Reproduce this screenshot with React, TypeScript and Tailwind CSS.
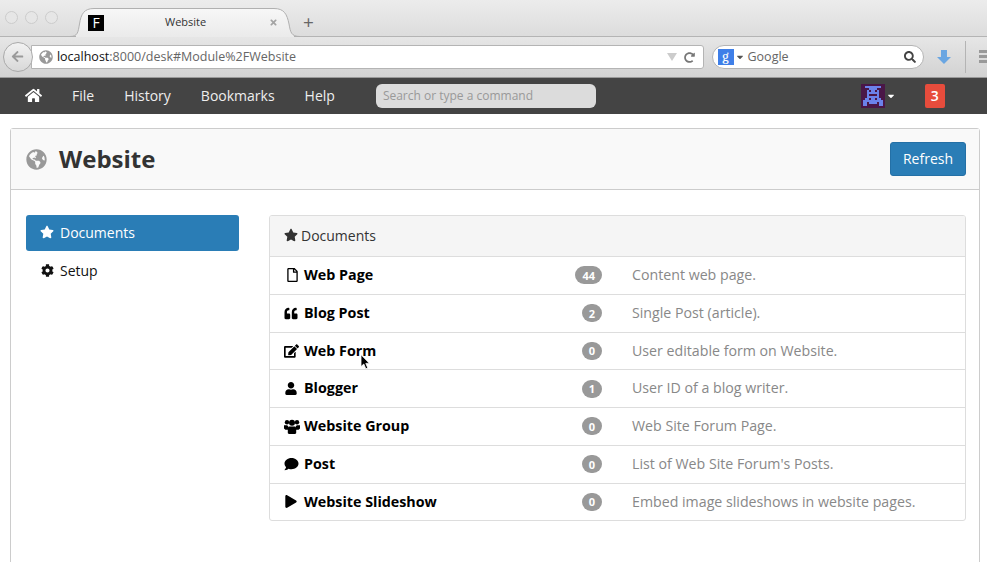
import type { IconType } from 'react-icons';
import {
  FaArrowLeft,
  FaCaretDown,
  FaCog,
  FaComment,
  FaEdit,
  FaGlobeAmericas,
  FaHome,
  FaPlay,
  FaQuoteLeft,
  FaRedoAlt,
  FaRegFile,
  FaSearch,
  FaStar,
  FaTimes,
  FaUser,
} from 'react-icons/fa';

interface DocRow {
  icon: IconType;
  name: string;
  count: number;
  description: string;
  iconClass: string;
}

// chunky three-person glyph, the package's version is too flat
function PeopleIcon({ className }: { className?: string }) {
  return (
    <svg viewBox="0 0 16 15" fill="currentColor" className={className}>
      <circle cx="3" cy="3.2" r="2.2" />
      <circle cx="13" cy="3.2" r="2.2" />
      <circle cx="8" cy="3.8" r="3" />
      <path d="M0 6.2h3.2l1 1.2v3.4H1.4L0 9.6zM16 6.2h-3.2l-1 1.2v3.4h2.8L16 9.6z" />
      <path d="M4.8 7.4h6.4l1 1.4v5c0 .7-.5 1.2-1.2 1.2H5c-.7 0-1.2-.5-1.2-1.2v-5z" />
    </svg>
  );
}

const ROWS: DocRow[] = [
  { icon: FaRegFile, name: 'Web Page', count: 44, description: 'Content web page.', iconClass: 'ml-[3px] h-[14px] w-[11px]' },
  { icon: FaQuoteLeft, name: 'Blog Post', count: 2, description: 'Single Post (article).', iconClass: 'h-[13px] w-[14px]' },
  { icon: FaEdit, name: 'Web Form', count: 0, description: 'User editable form on Website.', iconClass: 'h-[14px] w-[15px]' },
  { icon: FaUser, name: 'Blogger', count: 1, description: 'User ID of a blog writer.', iconClass: 'ml-px h-[13px] w-[12px]' },
  { icon: PeopleIcon, name: 'Website Group', count: 0, description: 'Web Site Forum Page.', iconClass: 'h-[15px] w-[16px]' },
  { icon: FaComment, name: 'Post', count: 0, description: "List of Web Site Forum's Posts.", iconClass: 'h-[14px] w-[15px]' },
  { icon: FaPlay, name: 'Website Slideshow', count: 0, description: 'Embed image slideshows in website pages.', iconClass: 'ml-px h-[13px] w-[12px]' },
];

const NAV_ITEMS = ['File', 'History', 'Bookmarks', 'Help'];

// pixel invader used as the avatar
const INVADER = [
  '............',
  '..XXXXXXXX..',
  '....XXXX....',
  '...X.XX.X...',
  '...XXXXXX...',
  '...X....X...',
  '...XXXXXX...',
  '..XX.XX.XX..',
  '.XXXXXXXXXX.',
  '.XX.XXXX.XX.',
  '.XX......XX.',
  '............',
];

function Invader() {
  return (
    <svg viewBox="0 0 12 12" className="h-6 w-6 bg-[#4a1747]" shapeRendering="crispEdges">
      {INVADER.flatMap((line, y) =>
        line.split('').map((cell, x) =>
          cell === 'X' ? <rect key={`${x}-${y}`} x={x} y={y} width={1} height={1} fill="#6b82ea" /> : null,
        ),
      )}
    </svg>
  );
}

function TabStrip() {
  return (
    <div className="relative flex h-[37px] items-start bg-gradient-to-b from-[#ececec] to-[#dcdcdc]">
      <div className="absolute bottom-0 left-0 right-0 h-px bg-[#b4b4b4]" />
      <div className="ml-[5px] mt-[11px] flex gap-[7px]">
        <span className="h-[13px] w-[13px] rounded-full border border-[#cccccc] bg-[#e6e6e6]" />
        <span className="h-[13px] w-[13px] rounded-full border border-[#cccccc] bg-[#e6e6e6]" />
        <span className="h-[13px] w-[13px] rounded-full border border-[#cccccc] bg-[#e6e6e6]" />
      </div>
      <div className="relative ml-[12px] mt-[8px] h-[29px] w-[230px]">
        <svg viewBox="0 0 230 29" className="absolute inset-0 h-full w-full">
          <defs>
            <linearGradient id="tabFill" x1="0" y1="0" x2="0" y2="1">
              <stop offset="0" stopColor="#f7f7f7" />
              <stop offset="1" stopColor="#ebebeb" />
            </linearGradient>
          </defs>
          <path
            d="M0 28.5 C8 28.5 8 24 9.5 16 C11 6 14 0.5 24 0.5 L204 0.5 C214 0.5 217 6 219 16 C220.5 24 221 28.5 230 28.5 Z"
            fill="url(#tabFill)"
            stroke="#b0b0b0"
          />
          <path d="M6 28.5 L224 28.5" stroke="#ebebeb" />
        </svg>
        <div className="relative flex h-full items-center">
          <span className="ml-[18px] grid h-4 w-4 place-items-center bg-black text-[14px] leading-none text-white">F</span>
          <span className="ml-[61px] text-[11px] text-[#333]">Website</span>
          <FaTimes className="ml-[63px] h-[9px] w-[9px] text-[#a4a4a4]" />
        </div>
      </div>
      <span className="ml-[3px] mt-[12px] text-[19px] leading-[20px] text-[#666]">+</span>
    </div>
  );
}

function Toolbar() {
  return (
    <div className="flex h-[40px] items-center bg-gradient-to-b from-[#e6e6e6] to-[#d2d2d2] pb-px">
      <div className="z-10 ml-[3px] grid h-[30px] w-[30px] place-items-center rounded-full border border-[#aaa] bg-gradient-to-b from-[#f2f2f2] to-[#d8d8d8]">
        <FaArrowLeft className="h-[13px] w-[13px] text-[#9a9a9a]" />
      </div>
      <div className="-ml-[2px] flex h-[24px] w-[674px] items-center rounded-r-[3px] border border-[#b4b4b4] bg-white pl-[7px] pt-px text-[12.5px]">
        <FaGlobeAmericas className="h-[14px] w-[14px] text-[#999]" />
        <span className="ml-[4px] text-[#111]">localhost</span>
        <span className="text-[#666]">:8000/desk#Module%2FWebsite</span>
        <span className="ml-auto h-0 w-0 border-x-[5px] border-t-[8px] border-x-transparent border-t-[#ccc]" />
        <FaRedoAlt className="ml-[7px] mr-[8px] h-[11px] w-[11px] text-[#777]" />
      </div>
      <div className="ml-[8px] flex h-[24px] w-[213px] items-center rounded-full border border-[#b4b4b4] bg-white pl-[5px] pt-px text-[12.5px] text-[#666]">
        <span className="grid h-4 w-4 place-items-center bg-[#3f7fe8] font-serif text-[14px] leading-none text-white">g</span>
        <FaCaretDown className="ml-[1px] h-[10px] w-[10px] text-[#555]" />
        <span className="ml-[3px]">Google</span>
        <FaSearch className="ml-auto mr-[7px] h-[12px] w-[12px] text-[#444]" />
      </div>
      <svg viewBox="0 0 14 14" fill="#6aa6e2" className="ml-[13px] h-[14px] w-[14px]">
        <path d="M4 0h6v7h4l-7 7-7-7h4z" />
      </svg>
      <span className="ml-[14px] h-[32px] w-px bg-[#b4b4b4]" />
      <div className="ml-[13px] flex w-[8px] flex-col gap-[2px]">
        <span className="h-[3px] bg-[#999]" />
        <span className="h-[3px] bg-[#999]" />
        <span className="h-[3px] bg-[#999]" />
      </div>
    </div>
  );
}

function NavBar() {
  return (
    <div className="flex h-[37px] items-center border-t border-[#999] bg-[#444] pb-px text-[14px] text-[#eee]">
      <FaHome className="ml-[25px] h-[17px] w-[17px] text-white" />
      <div className="ml-[30px] flex gap-[30px]">
        {NAV_ITEMS.map((item) => (
          <span key={item}>{item}</span>
        ))}
      </div>
      <div className="ml-[41px] flex h-[24px] w-[220px] items-center rounded-[6px] bg-[#dcdcdc] px-[7px] pt-px text-[12px] text-[#999]">
        Search or type a command
      </div>
      <div className="ml-[265px]">
        <Invader />
      </div>
      <FaCaretDown className="ml-[1px] h-[10px] w-[10px] text-white" />
      <span className="ml-[29px] grid h-6 w-5 place-items-center rounded-[2px] bg-[#e74c3c] text-[14px] font-semibold text-white">3</span>
    </div>
  );
}

function Sidebar() {
  return (
    <div className="w-[213px] shrink-0 text-[14px]">
      <div className="flex h-[36px] items-center gap-[6px] rounded-[3px] bg-[#2a7db6] pb-[2px] pl-[14px] text-white">
        <FaStar className="h-[14px] w-[14px]" />
        Documents
      </div>
      <div className="flex h-[40px] items-center gap-[6px] pb-[2px] pl-[15px] text-[#111]">
        <FaCog className="h-[13px] w-[13px]" />
        Setup
      </div>
    </div>
  );
}

function DocumentRow({ row }: { row: DocRow }) {
  const Icon = row.icon;
  return (
    <div className="flex h-[37.75px] items-center border-t border-[#ddd]">
      <span className="flex w-[34px] shrink-0 pl-[14px] text-black">
        <Icon className={row.iconClass} />
      </span>
      <span className="w-[264px] shrink-0 pb-px text-[14.3px] font-bold text-black">{row.name}</span>
      <span className="flex w-[34px] shrink-0 justify-end">
        <span className="grid h-[18px] min-w-[20px] place-items-center rounded-full bg-[#999] px-[7px] text-[11px] font-bold leading-none text-white">
          {row.count}
        </span>
      </span>
      <span className="ml-[30px] pb-px text-[14.2px] text-[#888]">{row.description}</span>
    </div>
  );
}

function DocumentsPanel() {
  return (
    <div className="w-[697px] shrink-0 overflow-hidden rounded-[3px] border border-[#ddd]">
      <div className="flex h-[40px] items-center gap-[3px] bg-[#f5f5f5] pb-[2px] pl-[14px] text-[14px] text-[#333]">
        <FaStar className="h-[14px] w-[14px]" />
        Documents
      </div>
      {ROWS.map((row) => (
        <DocumentRow key={row.name} row={row} />
      ))}
    </div>
  );
}

export default function App() {
  return (
    <div className="relative h-[562px] w-[987px] overflow-hidden bg-white font-['Open_Sans',sans-serif]">
      <TabStrip />
      <Toolbar />
      <NavBar />
      <div className="px-[10px] pt-[14px]">
        <div className="h-[500px] w-[970px] rounded-t-[3px] border border-[#ccc]">
          <div className="flex h-[61px] items-center border-b border-[#ccc] bg-[#f9f9f9] px-[13px]">
            <FaGlobeAmericas className="ml-[2px] h-[21px] w-[21px] text-[#999]" />
            <h1 className="ml-[12px] -mt-px text-[24px] font-bold text-[#333]">Website</h1>
            <button className="ml-auto h-[34px] w-[76px] rounded-[3px] border border-[#2470a6] bg-[#2a7db6] pb-[2px] text-[14px] text-white">
              Refresh
            </button>
          </div>
          <div className="flex pl-[15px] pt-[25px]">
            <Sidebar />
            <div className="ml-[30px]">
              <DocumentsPanel />
            </div>
          </div>
        </div>
      </div>
      {/* mouse pointer caught in the capture */}
      <svg viewBox="0 0 10 16" className="absolute left-[360px] top-[354px] h-4 w-[10px]">
        <path d="M1 0.7 L1 12.6 L3.8 10 L5.8 14.8 L7.8 14 L5.8 9.4 L9.3 9.2 Z" fill="#000" stroke="#fff" strokeWidth="0.8" />
      </svg>
    </div>
  );
}
